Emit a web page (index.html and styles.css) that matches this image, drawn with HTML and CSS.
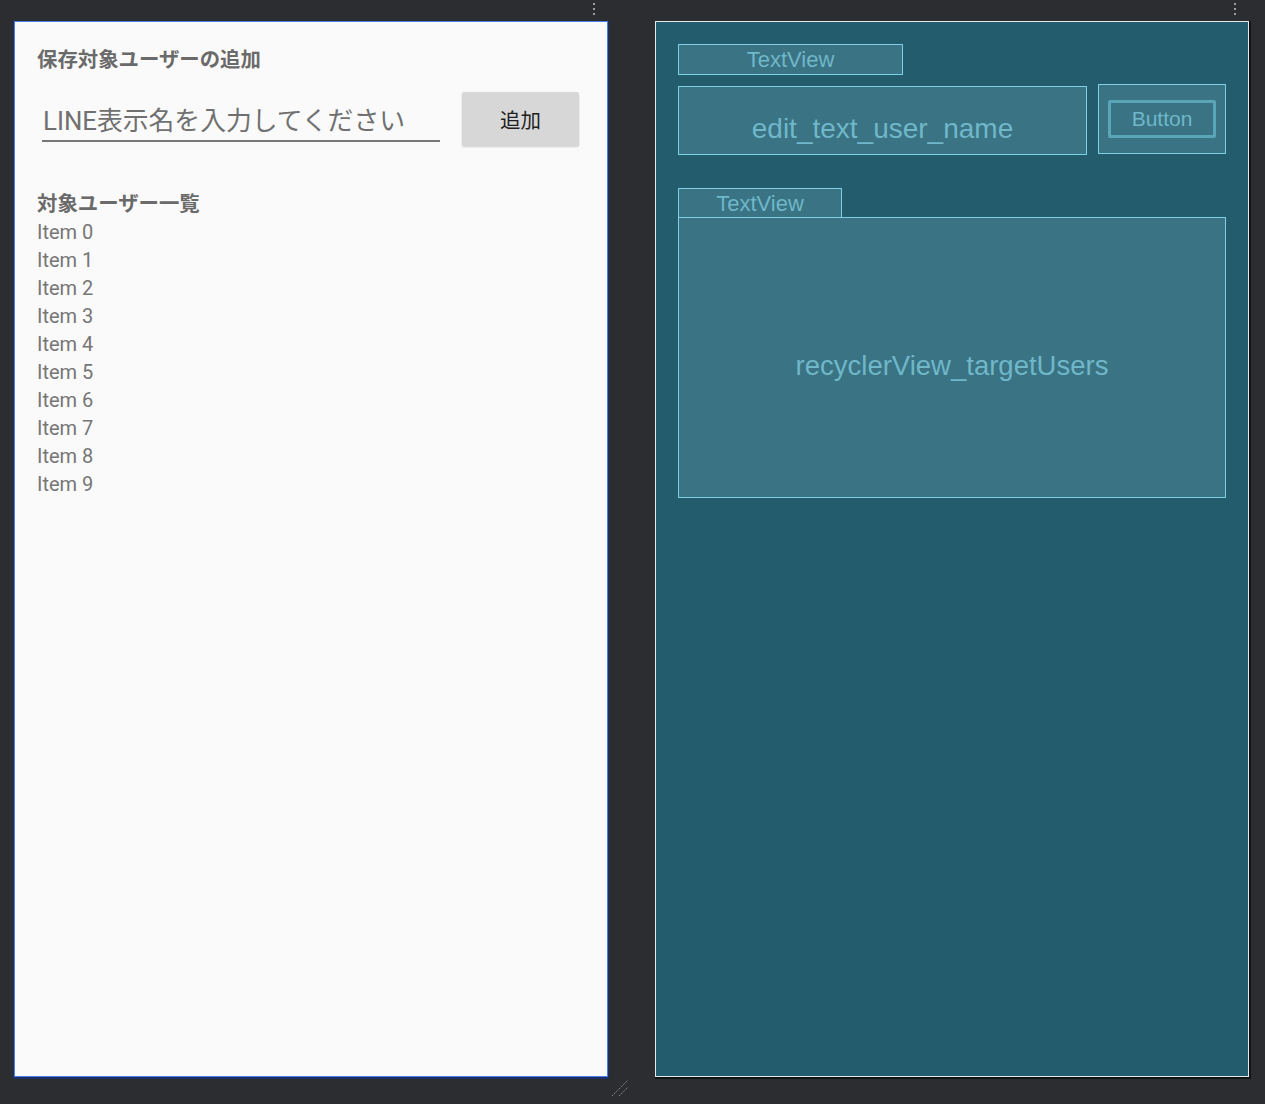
FILE: index.html
```html
<!DOCTYPE html>
<html lang="ja">
<head>
<meta charset="utf-8">
<title>Layout preview</title>
<link rel="stylesheet" href="styles.css">
</head>
<body>
<div class="workspace">
  <div class="column">
    <div class="column-head"><span class="dots"><i></i><i></i><i></i></span></div>
    <div class="panel design">
      <div class="section-title">保存対象ユーザーの追加</div>
      <div class="add-row">
        <div class="edit-field">LINE表示名を入力してください</div>
        <div class="add-button">追加</div>
      </div>
      <div class="section-title list-title">対象ユーザー一覧</div>
      <ul class="items">
        <li>Item 0</li>
        <li>Item 1</li>
        <li>Item 2</li>
        <li>Item 3</li>
        <li>Item 4</li>
        <li>Item 5</li>
        <li>Item 6</li>
        <li>Item 7</li>
        <li>Item 8</li>
        <li>Item 9</li>
      </ul>
    </div>
  </div>
  <div class="column">
    <div class="column-head"><span class="dots"><i></i><i></i><i></i></span></div>
    <div class="panel blueprint">
      <div class="bp bp-text1">TextView</div>
      <div class="bp-row">
        <div class="bp bp-edit">edit_text_user_name</div>
        <div class="bp bp-button"><span class="bp-button-inner">Button</span></div>
      </div>
      <div class="bp bp-text2">TextView</div>
      <div class="bp bp-recycler">recyclerView_targetUsers</div>
    </div>
  </div>
  <svg class="resize-handle" width="20" height="20" viewBox="0 0 20 20">
    <line x1="1" y1="19" x2="17" y2="3" stroke="#8a8c90" stroke-width="1" stroke-dasharray="1.5 1"/>
    <line x1="8" y1="19" x2="17" y2="10" stroke="#8a8c90" stroke-width="1" stroke-dasharray="1.5 1"/>
  </svg>
</div>
</body>
</html>
```

FILE: styles.css
```css
html, body {
  margin: 0;
  padding: 0;
}
body {
  background: #2b2d30;
  width: 1265px;
  height: 1104px;
  overflow: hidden;
}
.workspace {
  position: relative;
  display: flex;
  gap: 47px;
  padding-left: 14px;
}
.column {
  display: flex;
  flex-direction: column;
  width: 594px;
}
.column-head {
  height: 21px;
  display: flex;
  justify-content: flex-end;
  align-items: flex-start;
  padding-right: 13px;
}
.dots {
  display: flex;
  flex-direction: column;
  gap: 3px;
  padding-top: 3px;
}
.dots i {
  display: block;
  width: 2px;
  height: 2px;
  background: #9b9da1;
}
.panel {
  box-sizing: border-box;
  width: 594px;
  height: 1056px;
}

/* Design (left) panel */
.design {
  background: #fafafa;
  border: 1px solid #4a7de6;
  box-shadow: 0 1px 0 1px #1a2f66;
  padding: 24px 27px 0 22px;
  font-family: Roboto, "Noto Sans CJK JP", sans-serif;
}
.section-title {
  font-size: 20.4px;
  line-height: 28px;
  font-weight: bold;
  color: #6a6a6a;
}
.add-row {
  display: flex;
  align-items: flex-start;
  gap: 22px;
  margin-top: 18px;
}
.edit-field {
  box-sizing: border-box;
  width: 398px;
  margin-left: 5px;
  padding: 12px 0 2px 1px;
  font-size: 25.8px;
  line-height: 34px;
  color: #707070;
  border-bottom: 2px solid #777777;
  white-space: nowrap;
}
.add-button {
  width: 117px;
  height: 54px;
  display: flex;
  align-items: center;
  justify-content: center;
  background: #d7d7d7;
  border-radius: 2px;
  box-shadow: 0 1px 2px rgba(0, 0, 0, 0.18);
  font-size: 20.5px;
  color: #1f1f1f;
}
.list-title {
  margin-top: 44px;
}
.items {
  list-style: none;
  margin: 0;
  padding: 0;
}
.items li {
  font-size: 20px;
  line-height: 28px;
  color: #767676;
}

/* Blueprint (right) panel */
.blueprint {
  background: #225c6d;
  border: 1px solid #e3e8ea;
  box-shadow: 1px 1px 0 1px #121314;
  padding: 22px 0 0 22px;
  font-family: "Liberation Sans", Arial, sans-serif;
}
.bp {
  box-sizing: border-box;
  background: #3a7383;
  border: 1px solid #7fcfe4;
  color: #6fb7c9;
  display: flex;
  justify-content: center;
}
.bp-text1 {
  width: 225px;
  height: 31px;
  align-items: center;
  font-size: 22px;
}
.bp-row {
  display: flex;
  align-items: flex-start;
  gap: 11px;
  margin-top: 9px;
}
.bp-edit {
  width: 409px;
  height: 69px;
  margin-top: 2px;
  padding-top: 26px;
  font-size: 28px;
  line-height: 32px;
  align-items: flex-start;
}
.bp-button {
  width: 128px;
  height: 70px;
  align-items: center;
}
.bp-button-inner {
  box-sizing: border-box;
  width: 108px;
  height: 38px;
  border: 3px solid #5ba5b8;
  border-radius: 2px;
  display: flex;
  align-items: center;
  justify-content: center;
  font-size: 21px;
}
.bp-text2 {
  width: 164px;
  height: 30px;
  margin-top: 33px;
  padding-top: 1px;
  align-items: center;
  font-size: 22px;
  position: relative;
  z-index: 1;
}
.bp-recycler {
  width: 548px;
  height: 281px;
  margin-top: -1px;
  align-items: center;
  padding-top: 16px;
  font-size: 27.5px;
}

.resize-handle {
  position: absolute;
  left: 611px;
  top: 1077px;
}
```
